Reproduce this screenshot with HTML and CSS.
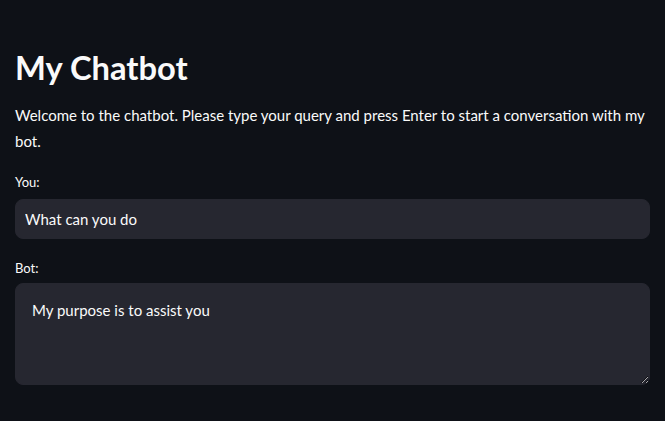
FILE: index.html
```html
<!DOCTYPE html>
<html lang="en">
<head>
<meta charset="utf-8">
<title>My Chatbot</title>
<link rel="stylesheet" href="styles.css">
</head>
<body>
<main class="app">
  <h1 class="title">My Chatbot</h1>
  <p class="intro">Welcome to the chatbot. Please type your query and press Enter to start a conversation with my bot.</p>
  <div class="field">
    <label class="label" for="you">You:</label>
    <input class="input" id="you" type="text" value="What can you do">
  </div>
  <div class="field">
    <label class="label" for="bot">Bot:</label>
    <textarea class="textarea" id="bot">My purpose is to assist you</textarea>
  </div>
</main>
</body>
</html>
```

FILE: styles.css
```css
html, body {
  margin: 0;
  padding: 0;
  background: #0e1117;
  color: #fafafa;
  font-family: "Lato", "Noto Sans", sans-serif;
}

.app {
  padding: 44px 15px 0 15px;
  display: flex;
  flex-direction: column;
}

.title {
  margin: 0;
  font-size: 32.7px;
  font-weight: 700;
  line-height: 48px;
}

.intro {
  margin: 10px 0 0 0;
  font-size: 15px;
  line-height: 26px;
}

.field {
  display: flex;
  flex-direction: column;
}

.field + .field {
  margin-top: 19px;
}

.intro + .field {
  margin-top: 18px;
}

.label {
  font-size: 13px;
  line-height: 20px;
  margin-bottom: 7px;
}

.field + .field .label {
  margin-bottom: 5px;
}

.input,
.textarea {
  box-sizing: border-box;
  width: 100%;
  background: #262730;
  color: #fafafa;
  border: 1px solid #262730;
  border-radius: 8px;
  font-family: inherit;
  font-size: 15px;
  outline: none;
  margin: 0;
}

.input {
  height: 40px;
  padding: 0 9px;
}

.textarea {
  height: 102px;
  padding: 15px 16px;
  line-height: 22px;
  resize: vertical;
  display: block;
}
```
